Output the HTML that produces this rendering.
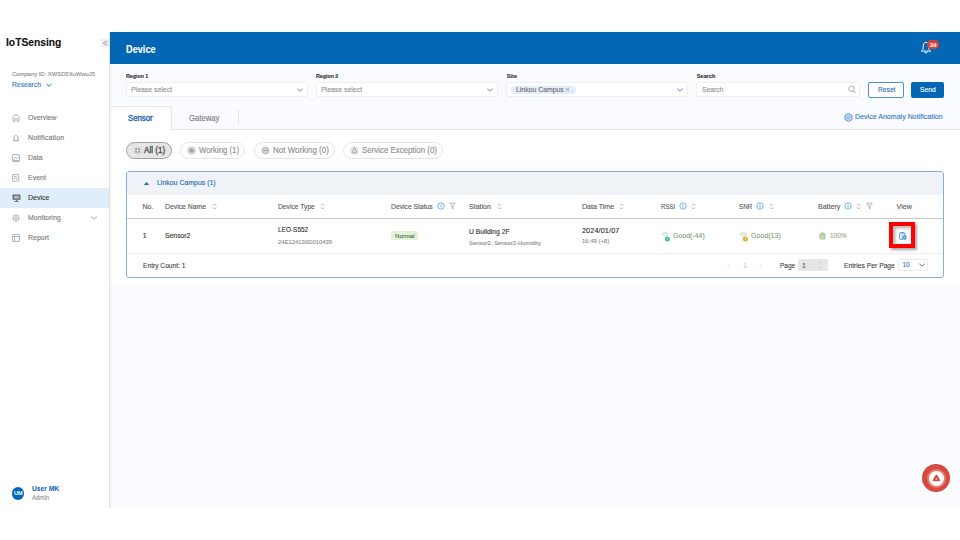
<!DOCTYPE html>
<html><head><meta charset="utf-8"><style>
html,body{margin:0;padding:0;width:960px;height:540px;overflow:hidden;background:#fff;font-family:"Liberation Sans",sans-serif;}
.t{position:absolute;white-space:nowrap;line-height:1;-webkit-text-stroke:0.12px currentColor;}
.b{position:absolute;}
svg.b{overflow:visible;}
</style></head><body>
<div class="b" style="left:0px;top:32px;width:109px;height:476px;background:#fff;"></div>
<div class="b" style="left:109px;top:32px;width:1px;height:476px;background:#e1e2e4;"></div>
<div class="b" style="left:110px;top:32px;width:850px;height:476px;background:#f9fbfe;"></div>
<div class="b" style="left:110px;top:32px;width:850px;height:32px;background:#0467b6;"></div>
<div class="t" style="left:6.00px;top:36.86px;font-size:10.8px;color:#111;font-weight:bold;transform:scaleX(0.9517);transform-origin:0 0;">IoTSensing</div>
<div class="b" style="left:101px;top:39px;width:8px;height:8px;background:#eeeeee;"></div>
<svg class="b" style="left:101px;top:39px" width="8" height="8" viewBox="0 0 8 8"><path d="M4.4 1.9 L2.3 4.1 L4.4 6.3 M6.5 1.9 L4.4 4.1 L6.5 6.3" fill="none" stroke="#8a8a8a" stroke-width="0.75"/></svg>
<div class="t" style="left:12.00px;top:71.22px;font-size:6px;color:#8a8a8a;transform:scaleX(0.9761);transform-origin:0 0;">Company ID: XWSD5XuWwuJ5</div>
<div class="t" style="left:12.00px;top:80.62px;font-size:7.3px;color:#3578c4;transform:scaleX(0.9250);transform-origin:0 0;">Research</div>
<svg class="b" style="left:45px;top:82px" width="8" height="6" viewBox="0 0 8 6"><path d="M1.5 2 L4 4.2 L6.5 2" fill="none" stroke="#3578c4" stroke-width="1"/></svg>
<div class="b" style="left:0px;top:188px;width:109px;height:20px;background:#e0eefc;"></div>
<div class="t" style="left:28.00px;top:114.07px;font-size:7px;color:#7a7a7a;transform:scaleX(0.9729);transform-origin:0 0;">Overview</div>
<div class="t" style="left:28.00px;top:134.07px;font-size:7px;color:#7a7a7a;letter-spacing:0.133px;">Notification</div>
<div class="t" style="left:28.00px;top:154.07px;font-size:7px;color:#7a7a7a;transform:scaleX(0.9806);transform-origin:0 0;">Data</div>
<div class="t" style="left:28.00px;top:174.07px;font-size:7px;color:#7a7a7a;">Event</div>
<div class="t" style="left:28.00px;top:194.07px;font-size:7px;color:#3a3a3a;">Device</div>
<div class="t" style="left:28.00px;top:214.07px;font-size:7px;color:#7a7a7a;">Monitoring</div>
<div class="t" style="left:28.00px;top:234.07px;font-size:7px;color:#7a7a7a;">Report</div>
<svg class="b" style="left:12px;top:114px" width="8" height="8" viewBox="0 0 8 8"><path d="M1 7.3 L1 4 C1 2.2 2.3 0.9 4 0.9 C5.7 0.9 7 2.2 7 4 L7 7.3 L5.2 7.3 L5.2 5.5 C5.2 4.8 4.7 4.3 4 4.3 C3.3 4.3 2.8 4.8 2.8 5.5 L2.8 7.3 Z" fill="none" stroke="#9a9a9a" stroke-width="0.8"/></svg>
<svg class="b" style="left:12px;top:134px" width="8" height="8" viewBox="0 0 8 8"><path d="M2 6 L2 4 C2 2.6 2.9 1.4 4 1.4 C5.1 1.4 6 2.6 6 4 L6 6 L6.8 6.6 L1.2 6.6 Z" fill="none" stroke="#9a9a9a" stroke-width="0.8"/><path d="M3.2 7.2 L4.8 7.2" stroke="#9a9a9a" stroke-width="0.7"/></svg>
<svg class="b" style="left:12px;top:154px" width="8" height="8" viewBox="0 0 8 8"><rect x="0.6" y="0.6" width="6.8" height="6.8" rx="0.6" fill="none" stroke="#9a9a9a" stroke-width="0.8"/><path d="M1.5 5.8 L3.2 3.6 L4.6 4.8 L6.5 2.2" fill="none" stroke="#9a9a9a" stroke-width="0.7"/><path d="M0.8 6.6 L7.2 6.6" stroke="#9a9a9a" stroke-width="0.7"/></svg>
<svg class="b" style="left:12px;top:174px" width="8" height="8" viewBox="0 0 8 8"><path d="M6.5 3.5 L6.5 1.3 C6.5 0.9 6.2 0.6 5.8 0.6 L1.3 0.6 C0.9 0.6 0.6 0.9 0.6 1.3 L0.6 6.7 C0.6 7.1 0.9 7.4 1.3 7.4 L3.6 7.4" fill="none" stroke="#9a9a9a" stroke-width="0.8"/><path d="M2 2.5 L5 2.5 M2 4 L4 4" stroke="#9a9a9a" stroke-width="0.6"/><circle cx="5.6" cy="5.6" r="1.6" fill="none" stroke="#9a9a9a" stroke-width="0.8"/></svg>
<svg class="b" style="left:11.5px;top:194px" width="9" height="8" viewBox="0 0 9 8"><rect x="0.6" y="0.6" width="7.8" height="5.2" rx="0.6" fill="#5a5a5a"/><rect x="1.7" y="1.6" width="5.6" height="3.2" fill="#aeb4bb"/><path d="M4.5 5.8 L4.5 7.2 M2.5 7.4 L6.5 7.4" stroke="#5a5a5a" stroke-width="0.9"/></svg>
<svg class="b" style="left:12px;top:214px" width="8" height="8" viewBox="0 0 8 8"><path d="M4 0.7 L6.8 2.3 L6.8 5.7 L4 7.3 L1.2 5.7 L1.2 2.3 Z" fill="none" stroke="#9a9a9a" stroke-width="0.8" stroke-linejoin="round"/><circle cx="4" cy="4" r="1.3" fill="none" stroke="#9a9a9a" stroke-width="0.7"/></svg>
<svg class="b" style="left:12px;top:234px" width="8" height="8" viewBox="0 0 8 8"><rect x="0.6" y="0.6" width="6.8" height="6.8" rx="0.6" fill="none" stroke="#9a9a9a" stroke-width="0.8"/><path d="M0.8 2.6 L7.2 2.6 M2.6 2.6 L2.6 7.2" stroke="#9a9a9a" stroke-width="0.7"/></svg>
<svg class="b" style="left:90px;top:215px" width="8" height="6" viewBox="0 0 8 6"><path d="M1 1.5 L4 4 L7 1.5" fill="none" stroke="#888" stroke-width="0.7"/></svg>
<div class="b" style="left:11.8px;top:487.2px;width:12.4px;height:12.4px;border-radius:50%;background:#0467b6;"></div>
<div class="t" style="left:13.70px;top:490.69px;font-size:5.8px;color:#fff;transform:scaleX(0.9535);transform-origin:0 0;-webkit-text-stroke:0.2px #fff;">UM</div>
<div class="t" style="left:32.00px;top:485.27px;font-size:7px;color:#2567b5;font-weight:bold;transform:scaleX(0.9506);transform-origin:0 0;">User MK</div>
<div class="t" style="left:32.00px;top:494.97px;font-size:6.3px;color:#969696;transform:scaleX(0.9574);transform-origin:0 0;">Admin</div>
<div class="t" style="left:126.00px;top:43.56px;font-size:10.8px;color:#fff;font-weight:bold;transform:scaleX(0.8498);transform-origin:0 0;">Device</div>
<div class="t" style="left:126.30px;top:74.06px;font-size:5.6px;color:#2e2e2e;font-weight:bold;transform:scaleX(0.9431);transform-origin:0 0;">Region 1</div>
<div class="t" style="left:316.30px;top:74.06px;font-size:5.6px;color:#2e2e2e;font-weight:bold;transform:scaleX(0.9431);transform-origin:0 0;">Region 2</div>
<div class="t" style="left:506.80px;top:74.06px;font-size:5.6px;color:#2e2e2e;font-weight:bold;">Site</div>
<div class="t" style="left:696.80px;top:74.06px;font-size:5.6px;color:#2e2e2e;font-weight:bold;">Search</div>
<div class="b" style="left:126px;top:82px;width:182px;height:15px;background:#fff;border:1px solid #eeeff1;border-radius:2px;box-sizing:border-box;"></div>
<div class="b" style="left:316px;top:82px;width:182px;height:15px;background:#fff;border:1px solid #eeeff1;border-radius:2px;box-sizing:border-box;"></div>
<div class="b" style="left:506px;top:82px;width:182px;height:15px;background:#fff;border:1px solid #eeeff1;border-radius:2px;box-sizing:border-box;"></div>
<div class="b" style="left:696px;top:82px;width:164px;height:15px;background:#fff;border:1px solid #eeeff1;border-radius:2px;box-sizing:border-box;"></div>
<div class="t" style="left:130.80px;top:86.37px;font-size:7.6px;color:#8f8f8f;transform:scaleX(0.9093);transform-origin:0 0;">Please select</div>
<div class="t" style="left:320.80px;top:86.37px;font-size:7.6px;color:#8f8f8f;transform:scaleX(0.9093);transform-origin:0 0;">Please select</div>
<div class="t" style="left:701.50px;top:86.37px;font-size:7.6px;color:#8f8f8f;transform:scaleX(0.8807);transform-origin:0 0;">Search</div>
<svg class="b" style="left:296px;top:87px" width="8" height="6" viewBox="0 0 8 6"><path d="M1.2 1.8 L4 4 L6.8 1.8" fill="none" stroke="#777" stroke-width="0.8"/></svg>
<svg class="b" style="left:486px;top:87px" width="8" height="6" viewBox="0 0 8 6"><path d="M1.2 1.8 L4 4 L6.8 1.8" fill="none" stroke="#777" stroke-width="0.8"/></svg>
<svg class="b" style="left:676px;top:87px" width="8" height="6" viewBox="0 0 8 6"><path d="M1.2 1.8 L4 4 L6.8 1.8" fill="none" stroke="#3578c4" stroke-width="0.8"/></svg>
<div class="b" style="left:511px;top:86px;width:64.5px;height:7.5px;border-radius:4px;background:#e2eefb;"></div>
<div class="t" style="left:515.50px;top:85.52px;font-size:7.3px;color:#6f6f6f;transform:scaleX(0.9425);transform-origin:0 0;">Linkou Campus</div>
<svg class="b" style="left:565px;top:87px" width="5" height="5" viewBox="0 0 5 5"><path d="M0.8 0.8 L4.2 4.2 M4.2 0.8 L0.8 4.2" stroke="#888" stroke-width="0.7"/></svg>
<svg class="b" style="left:847px;top:85px" width="11" height="10" viewBox="0 0 11 10"><circle cx="4.5" cy="3.9" r="2.7" fill="none" stroke="#9a9a9a" stroke-width="0.8"/><path d="M6.5 5.9 L8.6 8" stroke="#9a9a9a" stroke-width="0.9"/></svg>
<div class="b" style="left:868px;top:82px;width:36px;height:16px;background:#fff;border:1px solid #4d8fd5;border-radius:2px;box-sizing:border-box;"></div>
<div class="t" style="left:877.50px;top:86.47px;font-size:7.6px;color:#2d6db6;transform:scaleX(0.8814);transform-origin:0 0;">Reset</div>
<div class="b" style="left:911px;top:82px;width:33px;height:16px;background:#0467b6;border-radius:2px;"></div>
<div class="t" style="left:920.00px;top:86.47px;font-size:7.6px;color:#fff;transform:scaleX(0.8791);transform-origin:0 0;">Send</div>
<div class="b" style="left:110px;top:129px;width:850px;height:1px;background:#e4e5e8;"></div>
<div class="b" style="left:110px;top:130px;width:850px;height:156px;background:#fff;"></div>
<div class="b" style="left:110px;top:106px;width:62px;height:24px;background:#fff;border:1px solid #e6e7ea;border-bottom:none;border-left:none;border-radius:4px 3px 0 0;box-sizing:border-box;"></div>
<div class="t" style="left:128.10px;top:114.27px;font-size:8.3px;color:#2462aa;transform:scaleX(0.9357);transform-origin:0 0;-webkit-text-stroke:0.35px #2462aa;">Sensor</div>
<div class="t" style="left:189.40px;top:114.19px;font-size:8.4px;color:#7c7c7c;transform:scaleX(0.9168);transform-origin:0 0;">Gateway</div>
<div class="b" style="left:238px;top:110px;width:1px;height:15px;background:#e3e3e3;"></div>
<div class="t" style="left:854.60px;top:113.03px;font-size:8px;color:#3578c4;transform:scaleX(0.8834);transform-origin:0 0;">Device Anomaly Notification</div>
<svg class="b" style="left:844px;top:113px" width="9" height="9" viewBox="0 0 9 9"><path d="M4.5 0.5 L8 2.5 L8 6.5 L4.5 8.5 L1 6.5 L1 2.5 Z" fill="#cfe1f5" stroke="#4a8ad0" stroke-width="0.9" stroke-linejoin="round"/><circle cx="4.5" cy="4.5" r="1.4" fill="none" stroke="#4a8ad0" stroke-width="0.7"/></svg>
<div class="b" style="left:126px;top:142px;width:46px;height:17px;background:#e5e5e5;border:1px solid #a0a0a0;border-radius:9px;box-sizing:border-box;"></div>
<div class="t" style="left:144.30px;top:145.90px;font-size:8.5px;color:#505050;transform:scaleX(0.9502);transform-origin:0 0;-webkit-text-stroke:0.35px #505050;">All (1)</div>
<div class="b" style="left:180px;top:142px;width:65px;height:17px;background:#fff;border:1px solid #e4e4e4;border-radius:9px;box-sizing:border-box;"></div>
<div class="t" style="left:199.20px;top:145.90px;font-size:8.5px;color:#8c8c8c;transform:scaleX(0.9138);transform-origin:0 0;">Working (1)</div>
<div class="b" style="left:254px;top:142px;width:81px;height:17px;background:#fff;border:1px solid #e4e4e4;border-radius:9px;box-sizing:border-box;"></div>
<div class="t" style="left:273.00px;top:145.90px;font-size:8.5px;color:#8c8c8c;transform:scaleX(0.9402);transform-origin:0 0;">Not Working (0)</div>
<div class="b" style="left:343px;top:142px;width:100px;height:17px;background:#fff;border:1px solid #e4e4e4;border-radius:9px;box-sizing:border-box;"></div>
<div class="t" style="left:361.60px;top:145.90px;font-size:8.5px;color:#8c8c8c;transform:scaleX(0.9271);transform-origin:0 0;">Service Exception (0)</div>
<svg class="b" style="left:133px;top:146px" width="9" height="9" viewBox="0 0 9 9"><circle cx="4.5" cy="4.5" r="4" fill="#d8d8d8"/><path d="M2.3 2.3 h1.6 v1.6 h-1.6 z M5.1 2.3 h1.6 v1.6 h-1.6 z M2.3 5.1 h1.6 v1.6 h-1.6 z M5.1 5.1 h1.6 v1.6 h-1.6 z" fill="#9a9a9a"/></svg>
<svg class="b" style="left:187px;top:146px" width="9" height="9" viewBox="0 0 9 9"><circle cx="4.5" cy="4.5" r="4.1" fill="#cfcfcf"/><circle cx="4.5" cy="4.5" r="2" fill="#a5a5a5"/></svg>
<svg class="b" style="left:261px;top:146px" width="9" height="9" viewBox="0 0 9 9"><circle cx="4.5" cy="4.5" r="4" fill="#dcdcdc"/><circle cx="4.5" cy="4.5" r="3" fill="none" stroke="#a8a8a8" stroke-width="0.9"/><path d="M2.9 4.6 L6.1 4.6" stroke="#999" stroke-width="1"/></svg>
<svg class="b" style="left:349.5px;top:145.5px" width="9" height="9" viewBox="0 0 9 9"><circle cx="4.5" cy="4.5" r="4.3" fill="#e2e2e2"/><path d="M4.5 1.6 L7.1 6.7 L1.9 6.7 Z" fill="none" stroke="#a8a8a8" stroke-width="0.9" stroke-linejoin="round"/></svg>
<div class="b" style="left:126px;top:171px;width:818px;height:107px;border:1px solid #7fb1de;border-radius:3px;box-sizing:border-box;background:#fff;"></div>
<div class="b" style="left:127px;top:172px;width:816px;height:22.599999999999994px;background:#eff3f7;border-radius:2px 2px 0 0;"></div>
<svg class="b" style="left:143px;top:181px" width="7" height="5" viewBox="0 0 7 5"><path d="M0.9 3.9 L3.5 1.1 L6.1 3.9 Z" fill="#2a68b0"/></svg>
<div class="t" style="left:156.60px;top:179.25px;font-size:7.5px;color:#2b69b1;transform:scaleX(0.9257);transform-origin:0 0;">Linkou Campus (1)</div>
<div class="b" style="left:127px;top:218px;width:816px;height:1px;background:#c6c7c9;"></div>
<div class="b" style="left:127px;top:253px;width:816px;height:1px;background:#ededed;"></div>
<div class="t" style="left:142.50px;top:203.59px;font-size:7.1px;color:#5a5a5a;">No.</div>
<div class="t" style="left:165.00px;top:203.59px;font-size:7.1px;color:#5a5a5a;transform:scaleX(0.9620);transform-origin:0 0;">Device Name</div>
<div class="t" style="left:277.90px;top:203.59px;font-size:7.1px;color:#5a5a5a;transform:scaleX(0.9475);transform-origin:0 0;">Device Type</div>
<div class="t" style="left:390.80px;top:203.59px;font-size:7.1px;color:#5a5a5a;transform:scaleX(0.9519);transform-origin:0 0;">Device Status</div>
<div class="t" style="left:469.40px;top:203.59px;font-size:7.1px;color:#5a5a5a;transform:scaleX(0.9887);transform-origin:0 0;">Station</div>
<div class="t" style="left:581.90px;top:203.59px;font-size:7.1px;color:#5a5a5a;">Data Time</div>
<div class="t" style="left:660.80px;top:203.59px;font-size:7.1px;color:#5a5a5a;transform:scaleX(0.8565);transform-origin:0 0;">RSSI</div>
<div class="t" style="left:739.20px;top:203.59px;font-size:7.1px;color:#5a5a5a;transform:scaleX(0.8867);transform-origin:0 0;">SNR</div>
<div class="t" style="left:817.70px;top:203.59px;font-size:7.1px;color:#5a5a5a;transform:scaleX(0.9916);transform-origin:0 0;">Battery</div>
<div class="t" style="left:896.50px;top:203.59px;font-size:7.1px;color:#5a5a5a;letter-spacing:0.039px;">View</div>
<svg class="b" style="left:211.5px;top:202.5px" width="5" height="7" viewBox="0 0 5 7"><path d="M0.9 2.6 L2.5 1 L4.1 2.6 M0.9 4.4 L2.5 6 L4.1 4.4" fill="none" stroke="#8f8f8f" stroke-width="0.7"/></svg>
<svg class="b" style="left:320px;top:202.5px" width="5" height="7" viewBox="0 0 5 7"><path d="M0.9 2.6 L2.5 1 L4.1 2.6 M0.9 4.4 L2.5 6 L4.1 4.4" fill="none" stroke="#8f8f8f" stroke-width="0.7"/></svg>
<svg class="b" style="left:496.5px;top:202.5px" width="5" height="7" viewBox="0 0 5 7"><path d="M0.9 2.6 L2.5 1 L4.1 2.6 M0.9 4.4 L2.5 6 L4.1 4.4" fill="none" stroke="#8f8f8f" stroke-width="0.7"/></svg>
<svg class="b" style="left:619px;top:202.5px" width="5" height="7" viewBox="0 0 5 7"><path d="M0.9 2.6 L2.5 1 L4.1 2.6 M0.9 4.4 L2.5 6 L4.1 4.4" fill="none" stroke="#8f8f8f" stroke-width="0.7"/></svg>
<svg class="b" style="left:691px;top:202.5px" width="5" height="7" viewBox="0 0 5 7"><path d="M0.9 2.6 L2.5 1 L4.1 2.6 M0.9 4.4 L2.5 6 L4.1 4.4" fill="none" stroke="#8f8f8f" stroke-width="0.7"/></svg>
<svg class="b" style="left:768.5px;top:202.5px" width="5" height="7" viewBox="0 0 5 7"><path d="M0.9 2.6 L2.5 1 L4.1 2.6 M0.9 4.4 L2.5 6 L4.1 4.4" fill="none" stroke="#8f8f8f" stroke-width="0.7"/></svg>
<svg class="b" style="left:856px;top:202.5px" width="5" height="7" viewBox="0 0 5 7"><path d="M0.9 2.6 L2.5 1 L4.1 2.6 M0.9 4.4 L2.5 6 L4.1 4.4" fill="none" stroke="#8f8f8f" stroke-width="0.7"/></svg>
<svg class="b" style="left:436.5px;top:202px" width="8" height="8" viewBox="0 0 8 8"><circle cx="4" cy="4" r="3.2" fill="none" stroke="#5a9ee0" stroke-width="0.8"/><path d="M4 2.3 L4 5.7" stroke="#5a9ee0" stroke-width="0.8"/></svg>
<svg class="b" style="left:678.5px;top:202px" width="8" height="8" viewBox="0 0 8 8"><circle cx="4" cy="4" r="3.2" fill="none" stroke="#5a9ee0" stroke-width="0.8"/><path d="M4 2.3 L4 5.7" stroke="#5a9ee0" stroke-width="0.8"/></svg>
<svg class="b" style="left:756px;top:202px" width="8" height="8" viewBox="0 0 8 8"><circle cx="4" cy="4" r="3.2" fill="none" stroke="#5a9ee0" stroke-width="0.8"/><path d="M4 2.3 L4 5.7" stroke="#5a9ee0" stroke-width="0.8"/></svg>
<svg class="b" style="left:843.5px;top:202px" width="8" height="8" viewBox="0 0 8 8"><circle cx="4" cy="4" r="3.2" fill="none" stroke="#5a9ee0" stroke-width="0.8"/><path d="M4 2.3 L4 5.7" stroke="#5a9ee0" stroke-width="0.8"/></svg>
<svg class="b" style="left:448.5px;top:202px" width="7" height="8" viewBox="0 0 7 8"><path d="M0.8 1.2 L6.2 1.2 L4 4 L4 6.8 L3 6.2 L3 4 Z" fill="none" stroke="#9a9a9a" stroke-width="0.7" stroke-linejoin="round"/></svg>
<svg class="b" style="left:866px;top:202px" width="7" height="8" viewBox="0 0 7 8"><path d="M0.8 1.2 L6.2 1.2 L4 4 L4 6.8 L3 6.2 L3 4 Z" fill="none" stroke="#9a9a9a" stroke-width="0.7" stroke-linejoin="round"/></svg>
<div class="t" style="left:142.70px;top:232.27px;font-size:7px;color:#333;">1</div>
<div class="t" style="left:164.80px;top:232.07px;font-size:7px;color:#333;transform:scaleX(0.9741);transform-origin:0 0;">Sensor2</div>
<div class="t" style="left:277.90px;top:227.39px;font-size:7.1px;color:#2f2f2f;transform:scaleX(0.9108);transform-origin:0 0;">LEO-S552</div>
<div class="t" style="left:277.90px;top:239.12px;font-size:6px;color:#8c8c8c;transform:scaleX(0.9827);transform-origin:0 0;">24E124136D010439</div>
<div class="b" style="left:390.8px;top:230.8px;width:27.19999999999999px;height:9.599999999999994px;background:#e2f4d8;border-radius:2px;"></div>
<div class="t" style="left:394.60px;top:232.95px;font-size:6.2px;color:#52744a;transform:scaleX(0.9810);transform-origin:0 0;">Normal</div>
<div class="t" style="left:469.40px;top:228.42px;font-size:7.3px;color:#2f2f2f;transform:scaleX(0.9266);transform-origin:0 0;">U Building 2F</div>
<div class="t" style="left:469.40px;top:239.92px;font-size:6px;color:#8c8c8c;transform:scaleX(0.9793);transform-origin:0 0;">Sensor2, Sensor2-Humidity</div>
<div class="t" style="left:581.90px;top:226.92px;font-size:7.3px;color:#2f2f2f;letter-spacing:0.107px;">2024/01/07</div>
<div class="t" style="left:581.90px;top:238.22px;font-size:6px;color:#8c8c8c;transform:scaleX(0.9846);transform-origin:0 0;">16:49 (+8)</div>
<div class="t" style="left:672.50px;top:231.77px;font-size:7px;color:#8aa07a;transform:scaleX(0.9937);transform-origin:0 0;">Good(-44)</div>
<div class="t" style="left:751.00px;top:231.77px;font-size:7px;color:#8aa07a;letter-spacing:0.032px;">Good(13)</div>
<div class="t" style="left:830.30px;top:231.77px;font-size:7px;color:#98ab8a;transform:scaleX(0.9217);transform-origin:0 0;">100%</div>
<svg class="b" style="left:660.5px;top:231.5px" width="10" height="10" viewBox="0 0 10 10"><path d="M0.8 2.6 C3 0.6 6 0.6 8.2 2.6" fill="none" stroke="#ccd9c2" stroke-width="1.1"/><path d="M2.2 4.2 C3.6 3 5.4 3 6.8 4.2" fill="none" stroke="#ccd9c2" stroke-width="1.1"/><circle cx="4.5" cy="5.6" r="0.8" fill="#ccd9c2"/><circle cx="6.4" cy="6.9" r="2.5" fill="#3cc59d"/><path d="M6.4 5.8 L6.4 7.6" stroke="#fff" stroke-width="0.6"/></svg>
<svg class="b" style="left:739px;top:231.5px" width="10" height="10" viewBox="0 0 10 10"><path d="M0.8 2.6 C3 0.6 6 0.6 8.2 2.6" fill="none" stroke="#ccd9c2" stroke-width="1.1"/><path d="M2.2 4.2 C3.6 3 5.4 3 6.8 4.2" fill="none" stroke="#ccd9c2" stroke-width="1.1"/><circle cx="4.5" cy="5.6" r="0.8" fill="#ccd9c2"/><circle cx="6.4" cy="6.9" r="2.5" fill="#dfb034"/><path d="M6.4 5.8 L6.4 7.6" stroke="#fff" stroke-width="0.6"/></svg>
<svg class="b" style="left:818.5px;top:232px" width="7" height="8" viewBox="0 0 7 8"><rect x="0.4" y="1.2" width="6.2" height="6.4" rx="1" fill="#b4c8a6"/><rect x="2.3" y="0.3" width="2.4" height="1.4" rx="0.4" fill="#b4c8a6"/><path d="M2.2 3 L2.2 6.6 M3.5 3 L3.5 6.6 M4.8 3 L4.8 6.6" stroke="#e2ebdc" stroke-width="0.5"/></svg>
<div class="b" style="left:889px;top:222px;width:26px;height:26px;box-sizing:border-box;border:4px solid #ff0000;box-shadow:1.5px 2px 2.5px rgba(0,0,0,0.35), inset 2.5px 2.5px 3px rgba(0,0,0,0.28);background:#fff;"></div>
<svg class="b" style="left:898.6px;top:231.8px" width="8" height="8" viewBox="0 0 8 8"><path d="M5.8 3.6 L5.8 1.4 C5.8 0.9 5.4 0.6 5 0.6 L1.4 0.6 C0.9 0.6 0.6 0.9 0.6 1.4 L0.6 6.6 C0.6 7.1 0.9 7.4 1.4 7.4 L3.8 7.4" fill="none" stroke="#4a8ad0" stroke-width="0.9"/><path d="M1.6 1.8 L4.9 1.8" stroke="#4a8ad0" stroke-width="0.8"/><path d="M2.1 2.8 L2.1 6.6" stroke="#9cc0e8" stroke-width="0.6"/><circle cx="5.4" cy="5.5" r="2.2" fill="#3f84cf"/><path d="M4.7 4.4 L6.6 5.5 L4.7 6.6 Z" fill="#fff"/></svg>
<div class="t" style="left:142.70px;top:261.87px;font-size:7px;color:#444;transform:scaleX(0.9498);transform-origin:0 0;">Entry Count: 1</div>
<svg class="b" style="left:726px;top:262.5px" width="5" height="6" viewBox="0 0 5 6"><path d="M3.5 1 L1.5 3 L3.5 5" fill="none" stroke="#cfcfcf" stroke-width="0.7"/></svg>
<div class="t" style="left:743.10px;top:261.67px;font-size:7px;color:#cccccc;">1</div>
<svg class="b" style="left:757.5px;top:262.5px" width="5" height="6" viewBox="0 0 5 6"><path d="M1.5 1 L3.5 3 L1.5 5" fill="none" stroke="#cfcfcf" stroke-width="0.7"/></svg>
<div class="t" style="left:779.75px;top:261.82px;font-size:7px;color:#444;transform:scaleX(0.9330);transform-origin:0 0;">Page</div>
<div class="b" style="left:798px;top:259px;width:30px;height:12px;background:#e6e6e6;border-radius:2px;"></div>
<div class="t" style="left:801.90px;top:261.67px;font-size:7px;color:#555;">1</div>
<svg class="b" style="left:817px;top:260px" width="6" height="10" viewBox="0 0 6 10"><path d="M1.2 3.4 L3 1.6 L4.8 3.4 M1.2 6.6 L3 8.4 L4.8 6.6" fill="none" stroke="#c4c4c4" stroke-width="0.6"/></svg>
<div class="t" style="left:844.40px;top:261.57px;font-size:7px;color:#444;transform:scaleX(0.9609);transform-origin:0 0;">Entries Per Page</div>
<div class="b" style="left:897.5px;top:259px;width:30.0px;height:12px;background:#fff;border:1px solid #ebebeb;border-radius:2px;box-sizing:border-box;"></div>
<div class="t" style="left:902.50px;top:262.10px;font-size:6.5px;color:#3578c4;">10</div>
<svg class="b" style="left:918px;top:262px" width="8" height="6" viewBox="0 0 8 6"><path d="M1.2 1.8 L4 4 L6.8 1.8" fill="none" stroke="#3578c4" stroke-width="0.9"/></svg>
<svg class="b" style="left:919px;top:40px" width="14" height="15" viewBox="0 0 14 15"><path d="M7 2.4 C5 2.4 4.2 4.3 4.2 6.6 L4.2 8.6 C4.2 9.6 3.2 10.4 2.4 11.1 L11.6 11.1 C10.8 10.4 9.8 9.6 9.8 8.6 L9.8 6.6 C9.8 4.3 9 2.4 7 2.4 Z" fill="none" stroke="#fff" stroke-width="0.95" stroke-linejoin="round"/><path d="M5.8 11.8 A1.2 1.3 0 0 0 8.2 11.8" fill="none" stroke="#fff" stroke-width="0.95"/></svg>
<div class="b" style="left:927px;top:40px;width:12px;height:9px;border-radius:4.5px;background:#dc4136;"></div>
<div class="t" style="left:929.80px;top:42.22px;font-size:6px;color:#fff;font-weight:bold;-webkit-text-stroke:0;">39</div>
<div class="b" style="left:922px;top:464px;width:28px;height:28px;border-radius:50%;background:#d44a40;"></div>
<div class="b" style="left:926.5px;top:468.5px;width:19px;height:19px;border-radius:50%;background:#e97a72;"></div>
<div class="b" style="left:928.5px;top:470.5px;width:15px;height:15px;border-radius:50%;background:#fff;"></div>
<svg class="b" style="left:931.6px;top:474.2px" width="9" height="8" viewBox="0 0 9 8"><path d="M4.4 0.5 C5.1 0.5 8.2 6.1 8.2 6.7 C8.2 7.3 0.6 7.3 0.6 6.7 C0.6 6.1 3.7 0.5 4.4 0.5 Z" fill="#d44a40"/><circle cx="4.4" cy="4.9" r="0.9" fill="#f3c5c1"/></svg>
<div class="b" style="left:110px;top:64px;width:3px;height:444px;background:linear-gradient(90deg,rgba(0,0,0,0.035),rgba(0,0,0,0));"></div>
</body></html>
